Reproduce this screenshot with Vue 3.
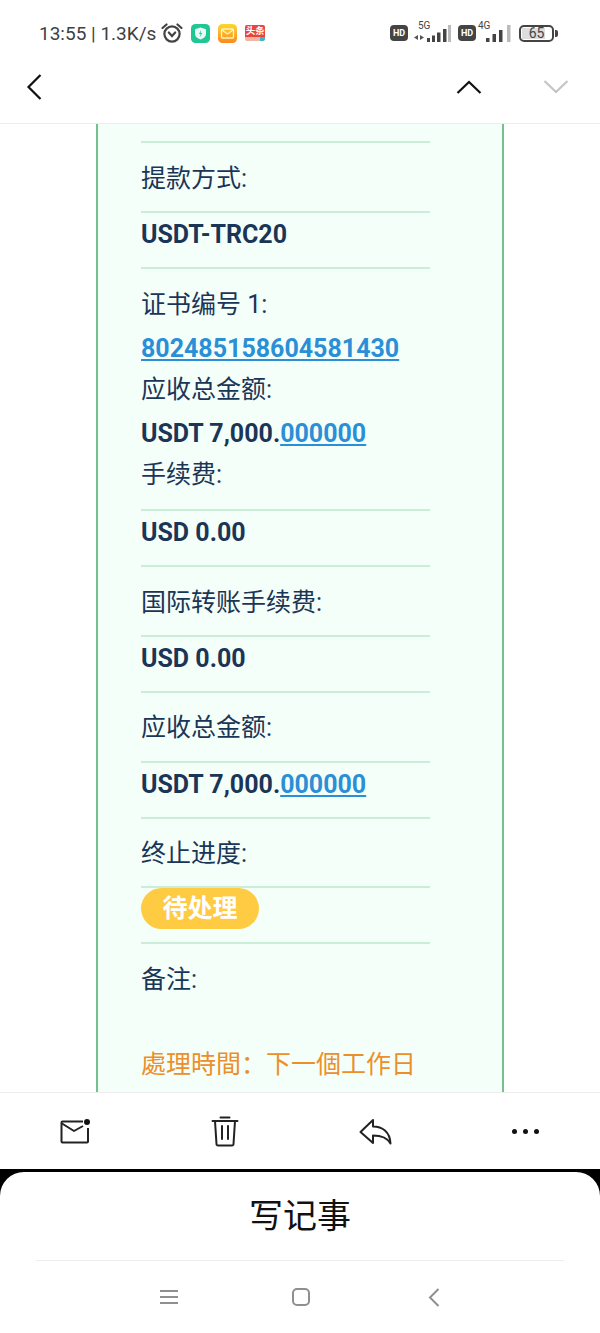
<script setup>
const rows = [
  { type: 'line', text: '提款方式:' },
  { type: 'value', text: 'USDT-TRC20' },
]
const feeRows = [
  { type: 'value', text: 'USD 0.00' },
  { type: 'line', text: '国际转账手续费:' },
  { type: 'value', text: 'USD 0.00' },
  { type: 'line', text: '应收总金额:' },
]
</script>

<template>
  <div class="page">
    <header class="status">
      <div class="status-left">
        <span class="clock">13:55 | 1.3K/s</span>
        <svg class="alarm" width="22" height="20" viewBox="0 0 22 20" fill="none" stroke="#444" stroke-width="2.2">
          <circle cx="11" cy="11" r="7.6" />
          <path d="M1.5 5 5.5 1.5M20.500 5 16.500 1.500" stroke-linecap="round" />
          <path d="M7.8 9.500 11 13l3.200-3.500" stroke-linecap="round" />
        </svg>
        <svg class="app" width="19" height="19" viewBox="0 0 19 19">
          <rect width="19" height="19" rx="4.500" fill="#1fc795" />
          <path d="M9.500 3.500 15 5.200v4.800c0 2.600-2.200 4.300-5.500 5.500C6.200 14.300 4 12.600 4 10V5.200z" fill="#e8fbf5" />
          <path d="M10 6 8 10h1.500L9 13l2.200-4H9.700z" fill="#1fc795" />
        </svg>
        <svg class="app" width="19" height="19" viewBox="0 0 19 19">
          <defs>
            <linearGradient id="mailGrad" x1="0" y1="0" x2="0" y2="1">
              <stop offset="0" stop-color="#fbd92b" />
              <stop offset="1" stop-color="#fb8a1e" />
            </linearGradient>
          </defs>
          <rect width="19" height="19" rx="4.500" fill="url(#mailGrad)" />
          <rect x="3.500" y="5" width="12" height="9" rx="1" fill="none" stroke="#fff3c4" stroke-width="1.300" />
          <path d="M4 6 9.500 10 15 6" fill="none" stroke="#fff3c4" stroke-width="1.300" />
        </svg>
        <span class="news">
          <span class="news-top">头条</span>
          <span class="news-strip"></span>
        </span>
      </div>
      <div class="status-right">
        <span class="hd">HD</span>
        <span class="signal signal-5g">
          <span class="net">5G</span>
          <svg width="38" height="17" viewBox="0 0 38 17">
            <path d="M5 10v5L1 12.500zM7 10v5l4-2.500z" fill="#555" />
            <rect x="14" y="13" width="3" height="4" fill="#444" />
            <rect x="19" y="10.500" width="3" height="6.500" fill="#444" />
            <rect x="24" y="7.500" width="3.500" height="9.500" fill="#444" />
            <rect x="30" y="4" width="3.500" height="13" fill="#444" />
            <rect x="35" y="0" width="3" height="17" fill="#bbb" />
          </svg>
        </span>
        <span class="hd hd-second">HD</span>
        <span class="signal signal-4g">
          <span class="net">4G</span>
          <svg width="33" height="17" viewBox="0 0 33 17">
            <rect x="8" y="13" width="3.500" height="4" fill="#444" />
            <rect x="14.500" y="9" width="3.500" height="8" fill="#444" />
            <rect x="21" y="5" width="3.500" height="12" fill="#444" />
            <rect x="29" y="0" width="3.500" height="17" fill="#bbb" />
          </svg>
        </span>
        <span class="battery"><span class="battery-level">65</span></span>
        <span class="battery-tip"></span>
      </div>
    </header>

    <nav class="topbar">
      <svg width="20" height="30" viewBox="0 0 20 30" fill="none" stroke="#111" stroke-width="2.2">
        <path d="M15.500 3 3.500 15l12 12" />
      </svg>
      <div class="topbar-arrows">
        <svg width="26" height="16" viewBox="0 0 26 16" fill="none" stroke="#111" stroke-width="2.2">
          <path d="M1.500 14 13 3l11.500 11" />
        </svg>
        <svg width="26" height="16" viewBox="0 0 26 16" fill="none" stroke="#c4c4c4" stroke-width="2.2">
          <path d="M1.500 2 13 13 24.500 2" />
        </svg>
      </div>
    </nav>

    <main class="mail">
      <div class="card">
        <div class="content">
          <div v-for="row in rows" :key="row.text" class="cell" :class="row.type">{{ row.text }}</div>

          <div class="plain first">证书编号 1:</div>
          <div class="plain strong"><a class="link">802485158604581430</a></div>
          <div class="plain">应收总金额:</div>
          <div class="plain strong">USDT 7,000.<a class="link">000000</a></div>
          <div class="plain last">手续费:</div>

          <div v-for="(row, i) in feeRows" :key="i" class="cell" :class="row.type">{{ row.text }}</div>

          <div class="cell value">USDT 7,000.<a class="link">000000</a></div>
          <div class="cell line">终止进度:</div>
          <div class="cell badge-cell"><span class="badge">待处理</span></div>
          <div class="note">备注:</div>
          <div class="notice">處理時間：下一個工作日</div>
        </div>
      </div>
    </main>

    <section class="toolbar">
      <button class="tool">
        <svg width="32" height="26" viewBox="0 0 32 26" fill="none" stroke="#222" stroke-width="2" stroke-linejoin="round">
          <path d="M29 9v13.500a1 1 0 0 1-1 1H3.500a1 1 0 0 1-1-1V3.500a1 1 0 0 1 1-1H24" />
          <path d="M3 4.500 15 12l9-5" />
          <circle cx="28" cy="3" r="3" fill="#111" stroke="none" />
        </svg>
      </button>
      <button class="tool">
        <svg width="28" height="31" viewBox="0 0 28 31" fill="none" stroke="#222" stroke-width="2" stroke-linecap="round">
          <path d="M1.500 5h25M9.500 1.500h9" />
          <path d="M4 5l1.500 23a1.500 1.500 0 0 0 1.500 1.500h14a1.500 1.500 0 0 0 1.500-1.500L24 5" />
          <path d="M11 10v13M17 10v13" />
        </svg>
      </button>
      <button class="tool">
        <svg width="33" height="27" viewBox="0 0 33 27" fill="none" stroke="#222" stroke-width="2" stroke-linejoin="round">
          <path d="M1.500 14 14 2v6.500c9 0 17 5 17.500 17-3-5.500-8-8-17.500-8V25z" />
        </svg>
      </button>
      <button class="tool dots">
        <span></span><span></span><span></span>
      </button>
    </section>

    <footer class="sheet-wrap">
      <div class="sheet">
        <div class="sheet-title">写记事</div>
        <div class="softkeys">
          <svg width="18" height="16" viewBox="0 0 18 16" stroke="#8f8f8f" stroke-width="2">
            <path d="M0 2h18M0 8h18M0 14h18" />
          </svg>
          <svg width="18" height="18" viewBox="0 0 18 18" fill="none" stroke="#8f8f8f" stroke-width="2">
            <rect x="1" y="1" width="16" height="16" rx="4" />
          </svg>
          <svg width="18" height="19" viewBox="0 0 18 19" fill="none" stroke="#8f8f8f" stroke-width="2">
            <path d="M14.500 1 6 9.500 14.500 18" />
          </svg>
        </div>
      </div>
    </footer>
  </div>
</template>

<style scoped>
.page {
  width: 600px;
  height: 1333px;
  display: flex;
  flex-direction: column;
  overflow: hidden;
  background: #fff;
  font-family: Roboto, "Noto Sans CJK SC", sans-serif;
}

.status {
  height: 62px;
  flex: none;
  display: flex;
  justify-content: space-between;
  align-items: flex-start;
  padding: 22px 42px 0 39px;
  box-sizing: border-box;
}

.status-left,
.status-right {
  display: flex;
  align-items: center;
  height: 22px;
}

.clock {
  font-size: 19px;
  color: #3f3f3f;
  white-space: nowrap;
}

.alarm {
  margin-left: 5px;
}

.app {
  margin-left: 8px;
}

.news {
  margin-left: 8px;
  width: 20px;
  height: 16px;
  display: flex;
  flex-direction: column;
  border-radius: 2px;
  overflow: hidden;
}

.news-top {
  height: 12px;
  background: #e8453c;
  color: #fff;
  font-size: 9.5px;
  font-weight: 700;
  line-height: 12px;
  text-align: center;
}

.news-strip {
  flex: 1;
  background: linear-gradient(90deg, #f3b4a8 75%, #39b8c4 75%);
}

.hd {
  width: 18px;
  height: 16px;
  border-radius: 4px;
  background: #444;
  color: #fff;
  font-size: 9px;
  font-weight: 700;
  line-height: 16px;
  text-align: center;
}

.hd-second {
  margin-left: 7px;
}

.signal {
  display: flex;
  position: relative;
  align-items: flex-end;
  height: 18px;
}

.signal-5g {
  margin-left: 5px;
}

.signal-4g {
  margin-left: 2px;
}

.net {
  position: absolute;
  top: -3px;
  font-size: 10px;
  line-height: 10px;
  color: #444;
}

.signal-5g .net {
  left: 5px;
}

.signal-4g .net {
  left: 0;
}

.battery {
  margin-left: 8px;
  width: 35px;
  height: 17px;
  box-sizing: border-box;
  border: 2px solid #444;
  border-radius: 5px;
  padding: 1px;
  display: flex;
}

.battery-level {
  flex: 1;
  background: linear-gradient(90deg, #ddd 78%, #fff 78%);
  color: #444;
  font-size: 14px;
  line-height: 11px;
  text-align: center;
}

.battery-tip {
  margin-left: 1px;
  width: 3px;
  height: 7px;
  background: #444;
  border-radius: 0 2px 2px 0;
}

.topbar {
  height: 62px;
  flex: none;
  display: flex;
  justify-content: space-between;
  align-items: center;
  padding: 0 31px 12px 25px;
  box-sizing: border-box;
  border-bottom: 1px solid #eee;
}

.topbar-arrows {
  display: flex;
  gap: 61px;
}

.mail {
  flex: 1;
  min-height: 0;
  overflow: hidden;
}

.card {
  width: 408px;
  height: 100%;
  margin: 0 auto;
  box-sizing: border-box;
  border-left: 2px solid #74c08f;
  border-right: 2px solid #74c08f;
  background: #f5fffa;
  padding: 17px 0 0 43px;
}

.content {
  width: 289px;
  color: #1b3556;
  font-size: 25px;
}

.cell {
  border-top: 2px solid #c9edd6;
  box-sizing: border-box;
}

.line {
  height: 69.7px;
  padding-top: 17.5px;
  line-height: 36px;
}

.value {
  height: 56px;
  line-height: 44px;
  font-weight: 700;
}

.plain {
  height: 42.5px;
  line-height: 42.5px;
}

.plain.first {
  border-top: 2px solid #c9edd6;
  height: 59.5px;
  padding-top: 15px;
  box-sizing: border-box;
}

.plain.last {
  height: 55.5px;
}

.strong {
  font-weight: 700;
  line-height: 46px;
}

.link {
  color: #2a8fd6;
  text-decoration: underline;
}

.badge-cell {
  height: 56px;
}

.badge {
  display: block;
  width: 118px;
  height: 41px;
  border-radius: 21px;
  background: #ffcb42;
  color: #fff;
  font-weight: 700;
  line-height: 42px;
  text-align: center;
}

.note {
  border-top: 2px solid #c9edd6;
  height: 105px;
  box-sizing: border-box;
  padding-top: 18px;
  line-height: 36px;
}

.notice {
  color: #ec8f2a;
  line-height: 36px;
  white-space: nowrap;
}

.toolbar {
  height: 77px;
  flex: none;
  display: flex;
  box-sizing: border-box;
  border-top: 1px solid #eee;
  padding-top: 1px;
}

.tool {
  flex: 1;
  display: flex;
  align-items: center;
  justify-content: center;
  padding: 0;
  border: none;
  background: none;
}

.dots {
  gap: 6px;
}

.dots span {
  width: 5px;
  height: 5px;
  border-radius: 50%;
  background: #111;
}

.sheet-wrap {
  height: 164px;
  flex: none;
  background: #000;
  padding-top: 3px;
  box-sizing: border-box;
}

.sheet {
  height: 100%;
  background: #fff;
  border-radius: 24px 24px 0 0;
  display: flex;
  flex-direction: column;
}

.sheet-title {
  height: 89px;
  margin: 0 36px;
  flex: none;
  box-sizing: border-box;
  padding-top: 19px;
  border-bottom: 1px solid #eee;
  color: #111;
  font-size: 34px;
  line-height: 50px;
  text-align: center;
}

.softkeys {
  flex: 1;
  display: flex;
  align-items: center;
  justify-content: center;
  gap: 114px;
  padding-left: 1px;
}
</style>
